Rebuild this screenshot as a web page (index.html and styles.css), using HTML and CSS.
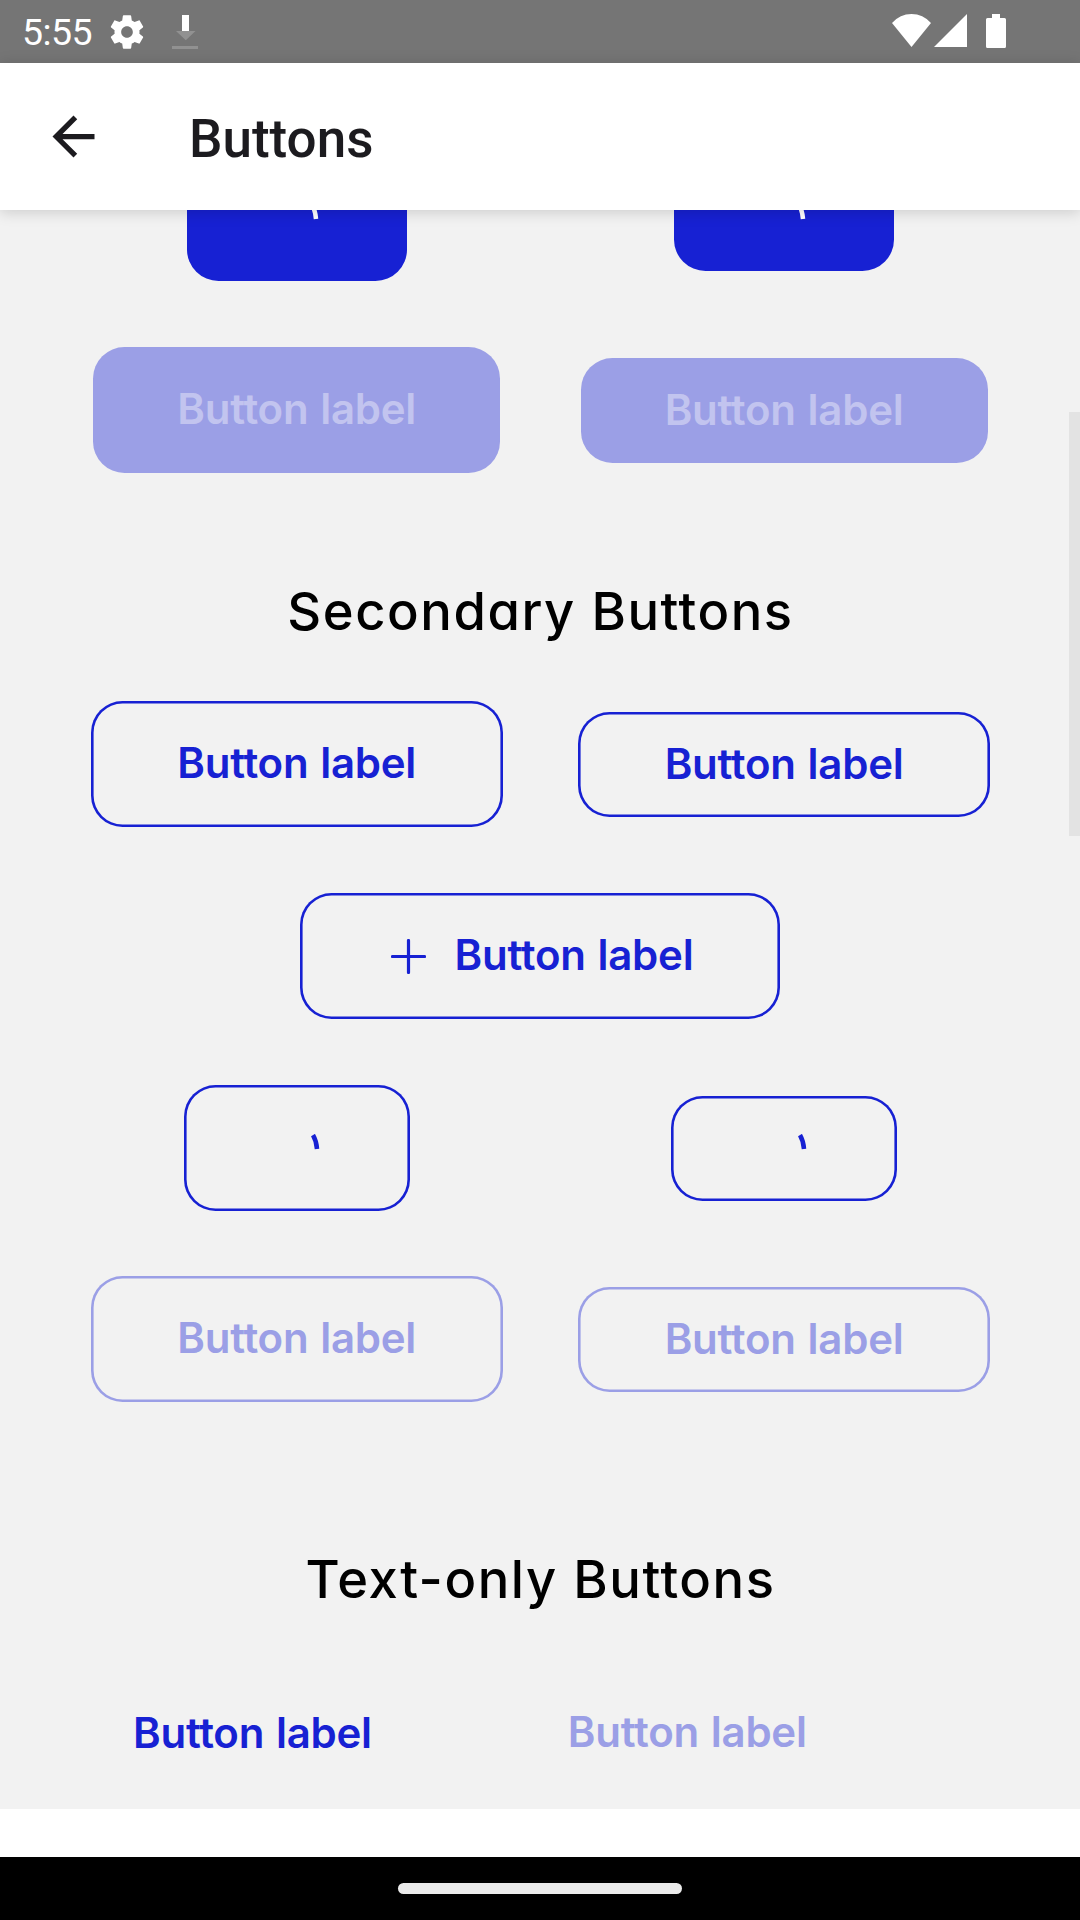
FILE: index.html
```html
<!DOCTYPE html>
<html lang="en">
<head>
<meta charset="utf-8">
<title>Buttons</title>
<link rel="stylesheet" href="styles.css">
</head>
<body>
<div class="screen">
  <div class="status">
    <span class="clock">5:55</span>
    <svg class="gear" width="40" height="40" viewBox="0 0 24 24"><path fill="#fff" d="M19.43 12.98c.04-.32.07-.64.07-.98s-.03-.66-.07-.98l2.11-1.65c.19-.15.24-.42.12-.64l-2-3.46c-.12-.22-.39-.3-.61-.22l-2.49 1c-.52-.4-1.08-.73-1.69-.98l-.38-2.65C14.46 2.18 14.25 2 14 2h-4c-.25 0-.46.18-.49.42l-.38 2.65c-.61.25-1.17.59-1.69.98l-2.49-1c-.23-.09-.49 0-.61.22l-2 3.46c-.13.22-.07.49.12.64l2.11 1.65c-.04.32-.07.65-.07.98s.03.66.07.98l-2.11 1.65c-.19.15-.24.42-.12.64l2 3.46c.12.22.39.3.61.22l2.49-1c.52.4 1.08.73 1.69.98l.38 2.65c.03.24.24.42.49.42h4c.25 0 .46-.18.49-.42l.38-2.65c.61-.25 1.17-.59 1.69-.98l2.49 1c.23.09.49 0 .61-.22l2-3.46c.12-.22.07-.49-.12-.64l-2.11-1.65zM12 15.5c-1.93 0-3.5-1.57-3.5-3.5s1.57-3.5 3.5-3.5 3.5 1.57 3.5 3.5-1.57 3.5-3.5 3.5z"/></svg>
    <svg class="download" width="26" height="34" viewBox="0 0 26 34"><path fill="#fff" d="M10 0h7v16h-7z"/><path fill="#919191" d="M4 16h19.500l-9.700 9.300zM0 31h26v3H0z"/></svg>
    <svg class="signals" width="114" height="34" viewBox="0 0 114 34"><path fill="#fff" d="M0 9Q8 0 19.500 0T39 9L19.500 33zM42 33L75 0v33zM100 0h8v4h4.500q1.500 0 1.500 1.500v27q0 1.500-1.500 1.500h-17q-1.500 0-1.500-1.500v-27Q94 4 95.500 4h4.500z"/></svg>
  </div>
  <header class="appbar">
    <svg width="63" height="63" viewBox="0 0 24 24"><path fill="#1c1b1f" d="M20 11H7.830l5.590-5.590L12 4l-8 8 8 8 1.410-1.410L7.830 13H20z"/></svg>
    <h1 class="title">Buttons</h1>
  </header>
  <main class="content">
    <div class="row">
      <button class="btn primary busy"><svg class="arc" width="9" height="16" viewBox="0 0 9 16"><path d="M2 1Q5.500 7 6 15"/></svg></button>
      <button class="btn primary busy small"><svg class="arc" width="9" height="16" viewBox="0 0 9 16"><path d="M2 1Q5.500 7 6 15"/></svg></button>
    </div>
    <div class="row">
      <button class="btn primary off">Button label</button>
      <button class="btn primary off small">Button label</button>
    </div>
    <h2 class="heading">Secondary Buttons</h2>
    <div class="row">
      <button class="btn outline">Button label</button>
      <button class="btn outline small">Button label</button>
    </div>
    <div class="row single">
      <button class="btn outline wide"><svg class="plus" width="35" height="35" viewBox="0 0 35 35"><path d="M17.500 1.500v32M1.500 17.500h32" stroke="currentColor" stroke-width="3.200" stroke-linecap="round"/></svg>Button label</button>
    </div>
    <div class="row tight">
      <button class="btn outline busy"><svg class="arc" width="9" height="16" viewBox="0 0 9 16"><path d="M2 1Q5.500 7 6 15"/></svg></button>
      <button class="btn outline busy small"><svg class="arc" width="9" height="16" viewBox="0 0 9 16"><path d="M2 1Q5.500 7 6 15"/></svg></button>
    </div>
    <div class="row">
      <button class="btn outline off">Button label</button>
      <button class="btn outline off small">Button label</button>
    </div>
    <h2 class="heading text-heading">Text-only Buttons</h2>
    <div class="row links">
      <button class="btn link">Button label</button>
      <button class="btn link off">Button label</button>
    </div>
    <div class="scrollbar"></div>
  </main>
  <div class="gap"></div>
  <div class="navbar"><div class="pill"></div></div>
</div>
</body>
</html>
```
FILE: styles.css
```css
* { box-sizing: border-box; }
body { margin: 0; background: #fff; }
svg { display: block; fill: none; flex: none; }

.screen {
  width: 1080px;
  height: 1920px;
  display: flex;
  flex-direction: column;
  overflow: hidden;
}

.status {
  height: 63px;
  flex: none;
  background: #757575;
  display: flex;
  align-items: flex-start;
  padding: 0 74px 0 22px;
}
.clock {
  width: 85px;
  font: 400 37.5px/65px Roboto, sans-serif;
  letter-spacing: -.6px;
  color: #fff;
}
.gear { margin-top: 12px; }
.download { margin: 15px 0 0 25px; }
.signals { margin: 14px 0 0 auto; }

.appbar {
  height: 147px;
  flex: none;
  display: flex;
  align-items: center;
  padding: 0 42px;
  background: #fff;
  box-shadow: 0 2px 14px rgba(0, 0, 0, .17);
  position: relative;
  z-index: 1;
}
.title {
  margin: 4px 0 0 84px;
  font: 500 53px/70px Roboto, sans-serif;
  color: #1c1b1f;
}

.content {
  height: 1599px;
  flex: none;
  overflow: hidden;
  background: #f2f2f2;
  padding: 0 53px;
  position: relative;
}
.row {
  display: grid;
  grid-template-columns: 487.4px 487.4px;
  place-items: center;
  height: 126px;
  margin-bottom: 66px;
}
.row:first-child { margin-top: -55px; }
.row:has(+ .heading) { margin-bottom: 0; }
.single { grid-template-columns: 974px; }
.tight { margin-bottom: 65px; }

.btn {
  width: 412px;
  height: 126px;
  padding: 0 0 3px;
  border: 0;
  border-radius: 31.5px;
  background: none;
  display: flex;
  align-items: center;
  justify-content: center;
  font: 600 42px/60px Inter, sans-serif;
  font-variant-ligatures: none;
  letter-spacing: -.25px;
  word-spacing: 1.5px;
  color: #1721d3;
  white-space: nowrap;
}
.small { height: 105px; padding-bottom: 1px; }
.primary { width: 407px; background: #1721d3; color: #fff; }
.primary.off { background: #9b9fe6; color: #c2c4ef; }
.outline { box-shadow: inset 0 0 0 2.6px currentColor; }
.outline.off, .link.off { color: #9b9fe6; }
.busy { width: 226px; padding-bottom: 1px; }
.primary.busy { width: 220px; }
.wide { width: 480px; gap: 29px; padding-left: 4px; }
.plus { margin-top: 4px; }
.arc {
  margin: -12px 0 0 37px;
  stroke: currentColor;
  stroke-width: 4.5;
}
.primary .arc { margin-left: 35px; }

.heading {
  margin: 99px 0 50px;
  padding-left: 1px;
  text-align: center;
  font: 500 52.5px/79px Inter, sans-serif;
  font-feature-settings: "cv11";
  font-variant-ligatures: none;
  letter-spacing: 1.55px;
  color: #000;
}
.text-heading { margin: 138px 0 51px; }

.links {
  display: flex;
  gap: 196px;
  margin-bottom: 0;
  padding-left: 80px;
}
.link { width: auto; padding-bottom: 0; }
.link.off { padding-bottom: 2px; }

.scrollbar {
  position: absolute;
  right: 0;
  top: 202px;
  width: 11px;
  height: 424px;
  background: #e3e3e3;
}

.gap { height: 48px; flex: none; background: #fff; }
.navbar {
  height: 63px;
  flex: none;
  background: #000;
  display: flex;
  justify-content: center;
  padding-top: 26px;
}
.pill { width: 284px; height: 11px; border-radius: 6px; background: #ebebeb; }
```
